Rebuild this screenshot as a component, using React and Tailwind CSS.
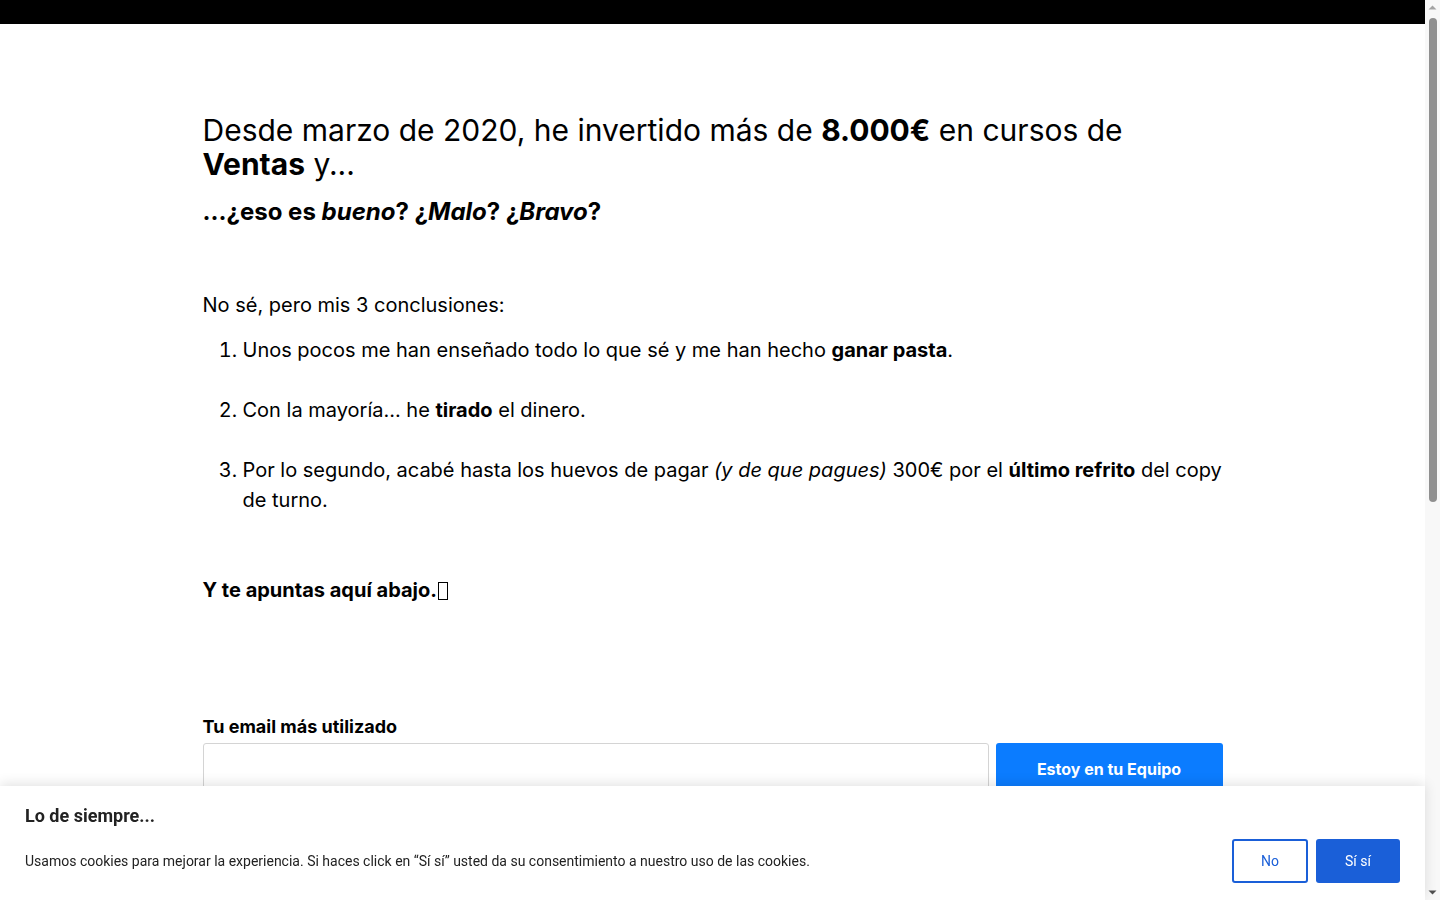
import { useState } from "react";

const conclusions = [
    <>
        Unos pocos me han enseñado todo lo que sé y me han hecho <strong>ganar pasta</strong>.
    </>,
    <>
        Con la mayoría... he <strong>tirado</strong> el dinero.
    </>,
    <>
        Por lo segundo, acabé hasta los huevos de pagar <em>(y de que pagues)</em> 300€ por el{" "}
        <strong>último refrito</strong> del copy de turno.
    </>,
];

function CookieBar({ onClose }) {
    return (
        <div className="fixed bottom-0 left-0 right-[15px] bg-white pl-[25px] pr-[25px] pt-[18px] pb-[17px] shadow-[0_-2px_12px_rgba(0,0,0,0.12)] font-['Roboto',sans-serif] text-[#222]">
            <h4 className="text-[18px] font-bold leading-[24px]">Lo de siempre...</h4>
            <div className="mt-[11px] flex items-center justify-between">
                <p className="text-[14px] leading-[20px]">
                    Usamos cookies para mejorar la experiencia. Si haces click en “Sí sí” usted da su consentimiento a nuestro uso de las cookies.
                </p>
                <div className="flex gap-2">
                    <button
                        onClick={onClose}
                        className="h-[44px] w-[76px] rounded-[3px] border-2 border-[#1a5fd8] text-[14px] text-[#1a5fd8]"
                    >
                        No
                    </button>
                    <button
                        onClick={onClose}
                        className="h-[44px] w-[84px] rounded-[3px] bg-[#1a5fd8] text-[14px] text-white"
                    >
                        Sí sí
                    </button>
                </div>
            </div>
        </div>
    );
}

// classic window scrollbar at the right edge
function Scrollbar() {
    return (
        <div className="flex h-screen w-[15px] shrink-0 flex-col items-center bg-[#f8f8f8]">
            <svg width="15" height="15" viewBox="0 0 15 15" className="shrink-0">
                <path d="M3.5 9.5 L7.5 5.5 L11.5 9.5 Z" fill="#a3a3a3" />
            </svg>
            <div className="mt-[3px] h-[484px] w-[8px] rounded-full bg-[#909090]" />
            <div className="flex-1" />
            <svg width="15" height="15" viewBox="0 0 15 15" className="shrink-0">
                <path d="M3.5 5.5 L7.5 9.5 L11.5 5.5 Z" fill="#505050" />
            </svg>
        </div>
    );
}

export default function App() {
    const [showCookies, setShowCookies] = useState(true);
    const [email, setEmail] = useState("");

    return (
        <div className="flex h-screen overflow-hidden bg-white font-['Inter',sans-serif] text-black">
            <div className="flex-1 overflow-y-auto">
                <div className="min-h-[1612px]">
                    <div className="h-6 bg-black" />
                    <main className="mx-auto max-w-[1020px] pt-[89px]">
                        <h1 className="text-[30px] leading-[34px]">
                            Desde marzo de 2020, he invertido más de <strong>8.000€</strong> en cursos de <strong>Ventas</strong> y...
                        </h1>
                        <h2 className="mt-[16px] text-[24px] font-bold leading-[30px]">
                            ...¿eso es <em>bueno</em>? ¿<em>Malo</em>? ¿<em>Bravo</em>?
                        </h2>

                        <p className="mt-[63px] text-[20px] leading-[30px]">No sé, pero mis 3 conclusiones:</p>
                        <ol className="mt-[15px] list-decimal pl-[40px] text-[20px] leading-[30px]">
                            {conclusions.map((item, i) => (
                                <li key={i} className="mb-[30px] last:mb-0">
                                    {item}
                                </li>
                            ))}
                        </ol>

                        <p className="mt-[60px] text-[20px] font-bold leading-[30px]">
                            Y te apuntas aquí abajo.
                            <span className="ml-[1px] inline-block h-[18px] w-[10px] translate-y-[3px] border border-black" />
                        </p>

                        <form className="mt-[110px]" onSubmit={(e) => e.preventDefault()}>
                            <label className="block text-[18px] font-bold leading-[24px]">Tu email más utilizado</label>
                            <div className="mt-[4px] flex gap-[7px]">
                                <input
                                    type="email"
                                    value={email}
                                    onChange={(e) => setEmail(e.target.value)}
                                    className="h-[52px] flex-1 rounded-[3px] border border-[#d4d4d4] px-3 text-[16px] outline-none"
                                />
                                <button className="h-[52px] w-[227px] rounded-[3px] bg-[#0b7cff] text-[16px] font-bold text-white">
                                    Estoy en tu Equipo
                                </button>
                            </div>
                        </form>
                    </main>
                </div>
            </div>
            <Scrollbar />
            {showCookies && <CookieBar onClose={() => setShowCookies(false)} />}
        </div>
    );
}
